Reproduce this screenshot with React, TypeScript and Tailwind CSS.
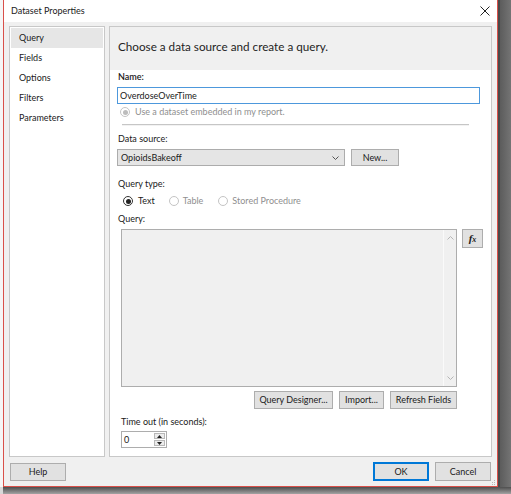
import React from 'react';

const font = "font-['Lato',sans-serif]";

const Radio: React.FC<{ checked?: boolean; disabled?: boolean }> = ({ checked, disabled }) => (
  <span
    className={`w-[10px] h-[10px] rounded-full border flex items-center justify-center bg-white ${
      disabled ? 'border-[#c4c4c4]' : 'border-[#333333]'
    } ${disabled && checked ? 'bg-[#f0f0f0]' : ''}`}
  >
    {checked && (
      <span className={`w-[5px] h-[5px] rounded-full ${disabled ? 'bg-[#bcbcbc]' : 'bg-[#222222]'}`} />
    )}
  </span>
);

const Btn: React.FC<{ w: string; children: React.ReactNode; primary?: boolean; h?: string }> = ({ w, children, primary, h }) => (
  <button
    className={`${w} ${h ?? 'h-[18px]'} flex items-center justify-center bg-[#e1e1e1] text-[#1a1a1a] ${
      primary ? 'border border-[#0078d7] shadow-[inset_0_0_0_1px_#0078d7]' : 'border border-[#adadad]'
    }`}
  >
    {children}
  </button>
);

const Chevron: React.FC<{ up?: boolean; className?: string }> = ({ up, className }) => (
  <svg width="7" height="4" viewBox="0 0 7 4" className={className}>
    <path d={up ? 'M0.5 3.5 L3.5 0.5 L6.5 3.5' : 'M0.5 0.5 L3.5 3.5 L6.5 0.5'} fill="none" stroke="currentColor" strokeWidth="1" />
  </svg>
);

const navItems = ['Query', 'Fields', 'Options', 'Filters', 'Parameters'];

export default function App() {
  return (
    <div className={`w-[511px] h-[494px] flex flex-col bg-[#f4f4f4] text-[9px] leading-[12px] text-[#1a1a1a] ${font}`}>
      <div className="h-[487px] flex">
        <div className="w-[3px] bg-[#f6f6f6]" />
        <div className="w-[495px] flex flex-col border-x border-b border-[#d9504a] bg-[#f0f0f0]">
          {/* title bar */}
          <div className="h-[22px] flex items-center justify-between bg-white pl-[7px] pr-[6px]">
            <span>Dataset Properties</span>
            <svg width="10" height="10" viewBox="0 0 10 10" className="mr-[1px] text-[#222]">
              <path d="M0.5 0.5 L9.5 9.5 M9.5 0.5 L0.5 9.5" stroke="currentColor" strokeWidth="1" />
            </svg>
          </div>

          {/* body */}
          <div className="flex-1 flex flex-col pt-[4px] px-[5px]">
            <div className="h-[431px] flex gap-[4px]">
              {/* nav */}
              <div className="w-[96px] bg-white border border-[#c8c8c8] p-[1px]">
                {navItems.map((item, i) => (
                  <div
                    key={item}
                    className={`h-[20px] flex items-center pl-[8px] ${i === 0 ? 'bg-[#e6e6e6]' : ''}`}
                  >
                    {item}
                  </div>
                ))}
              </div>

              {/* main panel */}
              <div className="w-[383px] bg-white border border-[#c8c8c8] flex flex-col">
                <div className="h-[43px] bg-[#f0f0f0] pt-[11px] pl-[8px]">
                  <span className="text-[11.7px] leading-[16px] text-[#1e1e1e]">
                    Choose a data source and create a query.
                  </span>
                </div>
                <div className="flex-1 flex flex-col pl-[7px]">
                  <div className="mt-[1px] ml-[1px] font-semibold">Name:</div>
                  <div className="mt-[4px] w-[363px] h-[17px] border border-[#4d98dc] flex items-center pl-[2px]">
                    OverdoseOverTime
                  </div>
                  <div className="mt-[2px] ml-[3px] flex items-center gap-[5px] text-[#8f8f8f]">
                    <Radio checked disabled />
                    <span>Use a dataset embedded in my report.</span>
                  </div>
                  <div className="mt-[6px] ml-[5px] w-[347px] h-[2px] border-t border-[#c6c6c6] border-b border-b-[#f2f2f2]" />

                  <div className="mt-[7px] ml-[1px]">Data source:</div>
                  <div className="mt-[4px] flex gap-[6px]">
                    <div className="w-[228px] h-[17px] bg-[#e5e5e5] border border-[#acacac] flex items-center justify-between pl-[3px] pr-[5px]">
                      <span>OpioidsBakeoff</span>
                      <Chevron className="text-[#555]" />
                    </div>
                    <Btn w="w-[48px]" h="h-[17px]">New...</Btn>
                  </div>

                  <div className="mt-[12px] ml-[1px]">Query type:</div>
                  <div className="mt-[5px] ml-[6px] flex items-center">
                    <Radio checked />
                    <span className="ml-[5px]">Text</span>
                    <span className="ml-[14px] flex items-center gap-[4px] text-[#8f8f8f]">
                      <Radio disabled />
                      <span>Table</span>
                    </span>
                    <span className="ml-[15px] flex items-center gap-[4px] text-[#8f8f8f]">
                      <Radio disabled />
                      <span>Stored Procedure</span>
                    </span>
                  </div>

                  <div className="mt-[6px] ml-[1px]">Query:</div>
                  <div className="mt-[4px] ml-[4px] flex gap-[5px]">
                    <div className="w-[336px] h-[158px] bg-[#f0f0f0] border border-[#adadad] flex justify-end">
                      <div className="w-[13px] border-l border-[#fafafa] flex flex-col items-center justify-between py-[6px] text-[#b5b5b5]">
                        <Chevron up />
                        <Chevron />
                      </div>
                    </div>
                    <Btn w="w-[21px]" h="h-[19px]">
                      <span className="font-['Liberation_Serif',serif] italic font-bold text-[11px] leading-none">
                        f<span className="text-[8px]">x</span>
                      </span>
                    </Btn>
                  </div>

                  <div className="mt-[4px] w-[340px] flex justify-end gap-[6px]">
                    <Btn w="w-[79px]">Query Designer...</Btn>
                    <Btn w="w-[45px]">Import...</Btn>
                    <Btn w="w-[67px]">Refresh Fields</Btn>
                  </div>

                  <div className="mt-[7px] ml-[4px]">Time out (in seconds):</div>
                  <div className="mt-[3px] ml-[4px] w-[46px] h-[17px] border border-[#adadad] bg-white flex items-center justify-between pl-[2px] pr-[1px]">
                    <span>0</span>
                    <div className="w-[11px] h-[13px] flex flex-col gap-[1px]">
                      <div className="flex-1 bg-[#ececec] border border-[#b8b8b8] flex items-center justify-center">
                        <svg width="5" height="3" viewBox="0 0 5 3"><path d="M0 3 L2.5 0 L5 3Z" fill="#222" /></svg>
                      </div>
                      <div className="flex-1 bg-[#ececec] border border-[#b8b8b8] flex items-center justify-center">
                        <svg width="5" height="3" viewBox="0 0 5 3"><path d="M0 0 L2.5 3 L5 0Z" fill="#222" /></svg>
                      </div>
                    </div>
                  </div>
                </div>
              </div>
            </div>

            {/* footer */}
            <div className="mt-[5px] flex items-start">
              <div className="mt-[1px] ml-[1px]">
                <Btn w="w-[56px]">Help</Btn>
              </div>
              <div className="ml-auto flex gap-[6px] mr-[1px]">
                <Btn w="w-[56px]" h="h-[19px]" primary>OK</Btn>
                <Btn w="w-[56px]" h="h-[19px]">Cancel</Btn>
              </div>
            </div>
            <div className="flex justify-end mt-[-1px] mr-[-4px]">
              <svg width="5" height="5" viewBox="0 0 5 5">
                <rect x="3" y="0" width="1" height="1" fill="#b8b8b8" />
                <rect x="1" y="2" width="1" height="1" fill="#b8b8b8" />
                <rect x="3" y="2" width="1" height="1" fill="#b8b8b8" />
                <rect x="3" y="4" width="1" height="1" fill="#b8b8b8" />
                <rect x="1" y="4" width="1" height="1" fill="#b8b8b8" />
              </svg>
            </div>
          </div>
        </div>
        <div className="flex-1 flex">
          <div className="w-[2px] bg-[#4a4a4a]" />
          <div className="flex-1 bg-gradient-to-r from-[#5c5c5c] to-[#747474]" />
        </div>
      </div>
      <div className="flex-1 flex">
        <div className="w-[3px] bg-[#d8d8d8]" />
        <div className="flex-1 bg-gradient-to-b from-[#4e4e4e] to-[#a3a3a3]" />
      </div>
    </div>
  );
}
